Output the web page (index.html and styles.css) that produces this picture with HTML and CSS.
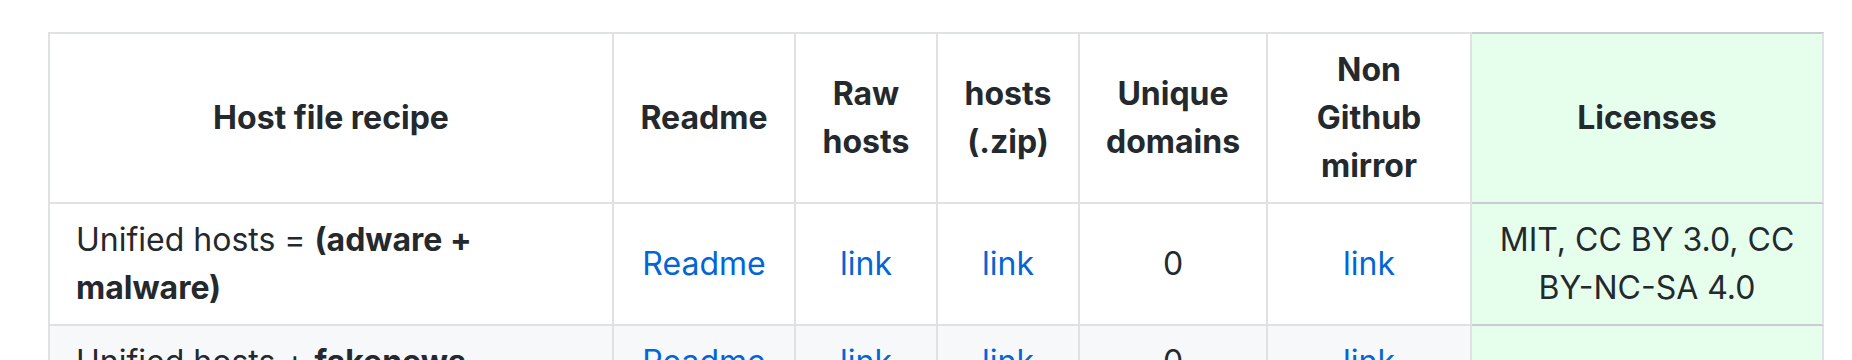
FILE: index.html
```html
<!DOCTYPE html>
<html lang="en">
<head>
<meta charset="utf-8">
<title>Host file recipes</title>
<link rel="stylesheet" href="styles.css">
</head>
<body>
<article class="markdown">
  <table class="recipes">
    <thead>
      <tr>
        <th class="c-recipe first">Host file recipe</th>
        <th class="c-readme">Readme</th>
        <th class="c-raw">Raw hosts</th>
        <th class="c-zip">hosts (.zip)</th>
        <th class="c-unique">Unique domains</th>
        <th class="c-mirror">Non Github mirror</th>
        <th class="c-license lic">Licenses</th>
      </tr>
    </thead>
    <tbody>
      <tr>
        <td class="first left">Unified hosts = <strong>(adware + malware)</strong></td>
        <td><a href="#">Readme</a></td>
        <td><a href="#">link</a></td>
        <td><a href="#">link</a></td>
        <td>0</td>
        <td><a href="#">link</a></td>
        <td class="lic">MIT, CC BY 3.0, CC BY-NC-SA 4.0</td>
      </tr>
      <tr class="alt">
        <td class="first left">Unified hosts + <strong>fakenews</strong></td>
        <td><a href="#">Readme</a></td>
        <td><a href="#">link</a></td>
        <td><a href="#">link</a></td>
        <td>0</td>
        <td><a href="#">link</a></td>
        <td class="lic"></td>
      </tr>
    </tbody>
  </table>
</article>
</body>
</html>
```
FILE: styles.css
```css
html {
  overflow: hidden;
  background: #fff;
}
body {
  margin: 0;
  padding: 32px 0 0 48px;
  font-family: Inter, "Liberation Sans", sans-serif;
  font-size: 32px;
  line-height: 48px;
  color: #24292e;
}
.recipes {
  border-collapse: separate;
  border-spacing: 0;
  table-layout: fixed;
  width: 1776px;
}
.recipes th,
.recipes td {
  box-sizing: border-box;
  padding: 12px 26px;
  border-right: 2px solid #dfe2e5;
  border-bottom: 2px solid #dfe2e5;
  text-align: center;
  vertical-align: middle;
}
.recipes th {
  font-weight: 700;
  border-top: 2px solid #dfe2e5;
}
.recipes .first {
  border-left: 2px solid #dfe2e5;
}
.recipes td.left {
  text-align: left;
}
.c-recipe { width: 566px; }
.c-readme { width: 182px; }
.c-raw { width: 142px; }
.c-zip { width: 142px; }
.c-unique { width: 188px; }
.c-mirror { width: 204px; }
.c-license { width: 352px; }
.recipes strong {
  font-weight: 700;
}
.recipes a {
  color: #0366d6;
  text-decoration: none;
}
.recipes tr.alt td {
  background: #f6f8fa;
}
.recipes th.lic,
.recipes td.lic,
.recipes tr.alt td.lic {
  background: #e6ffed;
  border-bottom-color: #c8cdd2;
}
.recipes th.lic {
  border-top-color: #c8cdd2;
}
```
